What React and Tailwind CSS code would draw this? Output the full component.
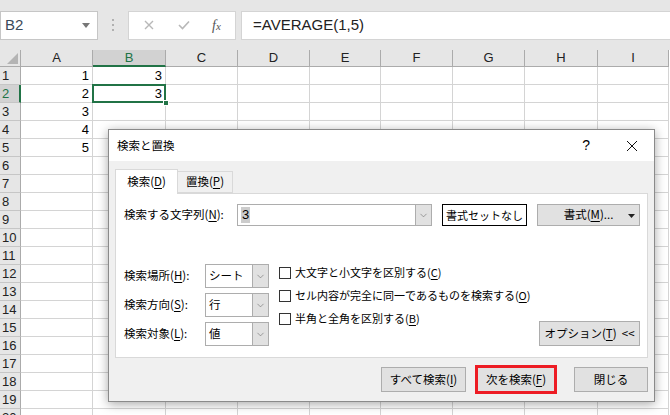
import { ChevronDown } from 'lucide-react'

const JP = { fontFamily: '"Noto Sans CJK JP", "Noto Sans", sans-serif' }
const cols = ['A', 'B', 'C', 'D', 'E', 'F', 'G', 'H', 'I']
const widths = [72, 73, 72, 72, 71, 72, 72, 73, 71]
const values = { 'A1': '1', 'A2': '2', 'A3': '3', 'A4': '4', 'A5': '5', 'B1': '3', 'B2': '3' }

function U({ children }) {
  return <span className="underline underline-offset-2">{children}</span>
}

function Select({ value }) {
  return (
    <div className="flex h-[24px] w-[64px] border border-[#adadad] bg-white">
      <div className="flex flex-1 items-center pl-[3px] text-[11.5px] text-black">{value}</div>
      <div className="flex w-[16px] items-center justify-center border-l border-[#adadad] bg-[#e1e1e1]">
        <ChevronDown size={11} strokeWidth={1.2} className="text-[#606060]" />
      </div>
    </div>
  )
}

function Check({ children }) {
  return (
    <div className="flex h-[23px] items-center whitespace-nowrap">
      <div className="h-[12px] w-[12px] shrink-0 border border-[#333] bg-white" />
      <span className="ml-[4px] text-[11px] text-black">{children}</span>
    </div>
  )
}

function Btn({ children, className = '' }) {
  return (
    <div className={'flex items-center justify-center whitespace-nowrap border border-[#adadad] bg-[#e1e1e1] text-[11.5px] text-black ' + className}>
      {children}
    </div>
  )
}

function Dialog() {
  return (
    <div style={JP} className="absolute left-[108px] top-[129px] flex h-[273px] w-[547px] flex-col whitespace-nowrap border border-[#8a8a8a] bg-[#f0f0f0] shadow-[0_2px_10px_rgba(0,0,0,0.35)]">
      <div className="flex h-[31px] items-center bg-white pl-[8px] text-[11.5px] text-black">
        <span>検索と置換</span>
        <span className="ml-auto mr-[36px] text-[14px]" style={{ fontFamily: '"Liberation Sans", sans-serif' }}>?</span>
        <svg width="12" height="12" viewBox="0 0 12 12" className="mr-[16px]">
          <path d="M1 1 L11 11 M11 1 L1 11" stroke="#111" strokeWidth="1" />
        </svg>
      </div>
      <div className="px-[6px] pt-[8px]">
        <div className="flex items-end">
          <div className="relative z-10 -mb-px flex h-[25px] w-[63px] items-center justify-center border border-b-0 border-[#d9d9d9] bg-white text-[11.5px] text-black">
            検索(<U>D</U>)
          </div>
          <div className="flex h-[22px] w-[55px] items-center justify-center border border-l-0 border-[#d9d9d9] bg-[#f0f0f0] text-[11.5px] text-black">
            置換(<U>P</U>)
          </div>
        </div>
        <div className="flex h-[165px] w-[533px] flex-col border border-[#d9d9d9] bg-white">
          <div className="mt-[10px] flex items-center pl-[8px]">
            <div className="w-[113px] text-[11.5px] text-black">検索する文字列(<U>N</U>):</div>
            <div className="flex h-[22px] w-[195px] border border-[#adadad] bg-white">
              <div className="flex flex-1 items-center pl-[3px]">
                <span className="bg-[#cccccc] px-px text-[13px] leading-[16px] text-black" style={{ fontFamily: '"Liberation Sans", sans-serif' }}>3</span>
              </div>
              <div className="flex w-[16px] items-center justify-center border-l border-[#adadad] bg-[#e1e1e1]">
                <ChevronDown size={11} strokeWidth={1.2} className="text-[#606060]" />
              </div>
            </div>
            <div className="ml-[10px] flex h-[22px] w-[85px] items-center justify-center border border-black bg-white text-[11px] text-black">
              書式セットなし
            </div>
            <Btn className="relative ml-[10px] h-[22px] w-[103px]">
              <span>書式(<U>M</U>)...</span>
              <svg width="7" height="4" viewBox="0 0 7 4" className="absolute right-[4px] top-[9px]">
                <path d="M0 0 H7 L3.5 4 Z" fill="#222" />
              </svg>
            </Btn>
          </div>
          <div className="mt-[38px] flex pl-[8px] pr-[7px]">
            <div className="flex flex-col gap-[5px]">
              {[['検索場所', 'H', 'シート'], ['検索方向', 'S', '行'], ['検索対象', 'L', '値']].map(([l, k, v]) => (
                <div key={k} className="flex items-center">
                  <div className="w-[81px] text-[11.5px] text-black">{l}(<U>{k}</U>):</div>
                  <Select value={v} />
                </div>
              ))}
            </div>
            <div className="ml-[10px] mt-[-3px] flex flex-col">
              <Check>大文字と小文字を区別する(<U>C</U>)</Check>
              <Check>セル内容が完全に同一であるものを検索する(<U>O</U>)</Check>
              <Check>半角と全角を区別する(<U>B</U>)</Check>
            </div>
            <Btn className="ml-auto h-[25px] w-[101px] self-end">オプション(<U>T</U>)&nbsp;&nbsp;&lt;&lt;</Btn>
          </div>
        </div>
        <div className="mt-[7px] flex items-center justify-end">
          <Btn className="h-[25px] w-[85px]">すべて検索(<U>I</U>)</Btn>
          <div className="ml-[9px] flex h-[29px] w-[82px] border-[3px] border-[#ed1c24]">
            <div className="flex flex-1 items-center justify-center bg-[#e1e1e1] text-[11.5px] text-black">次を検索(<U>F</U>)</div>
          </div>
          <Btn className="ml-[17px] h-[25px] w-[74px]">閉じる</Btn>
        </div>
      </div>
    </div>
  )
}

export default function App() {
  const rows = Array.from({ length: 20 }, (_, i) => i + 1)
  return (
    <div className="relative h-[415px] w-[670px] overflow-hidden bg-white" style={{ fontFamily: '"Liberation Sans", sans-serif' }}>
      <div className="flex h-[50px] items-center bg-[#e6e6e6]">
        <div className="flex h-[29px] w-[98px] items-center border border-[#c6c6c6] bg-white pl-[4px]">
          <span className="text-[15px] text-[#3b4a5a]">B2</span>
          <svg width="8" height="5" viewBox="0 0 8 5" className="ml-auto mr-[7px]">
            <path d="M0 0 H8 L4 5 Z" fill="#777" />
          </svg>
        </div>
        <div className="ml-[14px] flex flex-col gap-[3px]">
          <div className="h-[2px] w-[2px] bg-[#b0b0b0]" />
          <div className="h-[2px] w-[2px] bg-[#b0b0b0]" />
          <div className="h-[2px] w-[2px] bg-[#b0b0b0]" />
        </div>
        <div className="ml-[14px] flex h-[29px] w-[108px] items-center border border-[#d4d4d4] bg-white">
          <svg width="10" height="10" viewBox="0 0 10 10" className="ml-[15px]">
            <path d="M1 1 L9 9 M9 1 L1 9" stroke="#b8b8b8" strokeWidth="1.4" />
          </svg>
          <svg width="12" height="10" viewBox="0 0 12 10" className="ml-[24px]">
            <path d="M1 5 L4.5 8.5 L11 1.5" stroke="#b8b8b8" strokeWidth="1.6" fill="none" />
          </svg>
          <span className="ml-[22px] text-[14px] italic text-[#555]" style={{ fontFamily: '"Liberation Serif", serif' }}>
            f<span className="text-[11px]">x</span>
          </span>
        </div>
        <div className="ml-[5px] flex h-[29px] flex-1 items-center border-y border-l border-[#d4d4d4] bg-white pl-[11px]">
          <span className="text-[15px] text-[#222]">=AVERAGE(1,5)</span>
        </div>
      </div>
      <div className="flex h-[17px]">
        <div className="relative w-[21px] border-b border-r border-[#ababab] bg-[#e6e6e6]">
          <svg width="11" height="11" viewBox="0 0 11 11" className="absolute bottom-[2px] right-[2px]">
            <path d="M11 0 V11 H0 Z" fill="#b4b4b4" />
          </svg>
        </div>
        {cols.map((c, i) => (
          <div
            key={c}
            style={{ width: widths[i] }}
            className={
              'flex items-center justify-center border-r text-[13px] ' +
              (c === 'B'
                ? 'border-b-2 border-r-[#ababab] border-b-[#217346] bg-[#d2d2d2] text-[#217346]'
                : 'border-b border-[#ababab] bg-[#e6e6e6] text-[#222]')
            }
          >
            {c}
          </div>
        ))}
      </div>
      {rows.map((r) => (
        <div key={r} className="flex h-[18px]">
          <div
            className={
              'flex w-[21px] items-center border-b border-[#c6c6c6] pl-[2px] text-[13px] ' +
              (r === 2 ? 'border-r-2 border-r-[#217346] bg-[#d2d2d2] text-[#217346]' : 'border-r border-r-[#ababab] bg-[#e6e6e6] text-[#222]')
            }
          >
            {r}
          </div>
          {cols.map((c, i) => (
            <div
              key={c}
              style={{ width: widths[i] }}
              className="relative flex items-center justify-end border-b border-r border-[#d4d4d4] pr-[3px] text-[13px] text-black"
            >
              {values[c + r]}
              {c === 'B' && r === 2 && (
                <>
                  <div className="absolute -left-px -top-px bottom-[-1px] right-[-1px] z-10 border-2 border-[#217346]" />
                  <div className="absolute bottom-[-4px] right-[-4px] z-20 h-[6px] w-[6px] border border-white bg-[#217346]" />
                </>
              )}
            </div>
          ))}
        </div>
      ))}
      <Dialog />
    </div>
  )
}
